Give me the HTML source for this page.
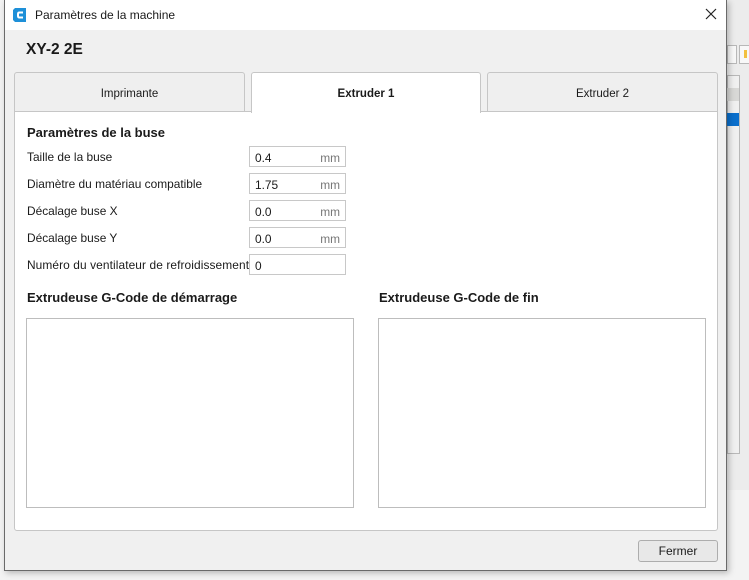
<!DOCTYPE html>
<html><head><style>
*{box-sizing:border-box;margin:0;padding:0}
body{width:749px;height:580px;background:#f3f3f3;position:relative;overflow:hidden;font-family:"Liberation Sans","DejaVu Sans",sans-serif;color:#1a1a1a}
.a{position:absolute}
.lbl{position:absolute;left:27px;font-size:11.9px}
.inp{position:absolute;left:249px;width:97px;height:21px;border:1px solid #c8c8c8;background:#fff;font-size:11.9px;padding:4px 5px}
.inp span{position:absolute;right:5px;top:4px;color:#777}
</style></head><body>
<div class="a" style="left:727px;top:0;width:22px;height:490px;background:#ececec"></div>
<div class="a" style="left:727px;top:45px;width:10px;height:19px;border:1px solid #b8b8b8;background:#f8f8f8"></div>
<div class="a" style="left:739px;top:45px;width:12px;height:19px;border:1px solid #b8b8b8;background:#f8f8f8"><div style="margin:4px 0 0 4px;width:3px;height:8px;background:#f2c040"></div></div>
<div class="a" style="left:727px;top:75px;width:13px;height:379px;border:1px solid #b8b8b8;background:#f0f0f0"></div>
<div class="a" style="left:727px;top:88px;width:12px;height:13px;background:#d8d8d6"></div>
<div class="a" style="left:727px;top:113px;width:12px;height:13px;background:#0a6fcc"></div>
<div class="a" style="left:4px;top:0;width:723px;height:571px;background:#f0f0f0;border:1px solid #6a6a6a;box-shadow:2px 2px 6px rgba(0,0,0,.25)"></div>
<div class="a" style="left:5px;top:0;width:721px;height:30px;background:#fff"></div>
<svg class="a" style="left:12px;top:7px" width="16" height="16" viewBox="0 0 16 16"><path d="M3 1h11v14H3L1 13V3z" fill="#1e90d8"/><path d="M11 5.5H7.5Q6 5.5 6 7v2q0 1.5 1.5 1.5H11" stroke="#fff" stroke-width="2" fill="none"/></svg>
<div class="a" style="left:35px;top:8px;font-size:12px">Paramètres de la machine</div>
<svg class="a" style="left:705px;top:8px" width="12" height="12"><path d="M1 1L11 11M11 1L1 11" stroke="#222" stroke-width="1.2"/></svg>
<div class="a" style="left:26px;top:41px;font-size:15.5px;font-weight:bold">XY-2 2E</div>
<div class="a" style="left:14px;top:72px;width:231px;height:40px;border:1px solid #c6c6c6;border-radius:3px 3px 0 0;background:#efefef;font-size:11.5px;text-align:center;line-height:42px">Imprimante</div>
<div class="a" style="left:487px;top:72px;width:231px;height:40px;border:1px solid #c6c6c6;border-radius:3px 3px 0 0;background:#efefef;font-size:11.5px;text-align:center;line-height:42px">Extruder 2</div>
<div class="a" style="left:14px;top:111px;width:704px;height:420px;border:1px solid #c6c6c6;border-radius:0 0 3px 3px;background:#fff"></div>
<div class="a" style="left:251px;top:72px;width:230px;height:41px;border:1px solid #c6c6c6;border-bottom:none;border-radius:3px 3px 0 0;background:#fff;font-size:11.5px;font-weight:bold;text-align:center;line-height:42px">Extruder 1</div>
<div class="a" style="left:27px;top:125px;font-size:13px;font-weight:bold">Paramètres de la buse</div>
<div class="lbl" style="top:150px">Taille de la buse</div>
<div class="lbl" style="top:177px">Diamètre du matériau compatible</div>
<div class="lbl" style="top:204px">Décalage buse X</div>
<div class="lbl" style="top:231px">Décalage buse Y</div>
<div class="lbl" style="top:258px;letter-spacing:0.1px">Numéro du ventilateur de refroidissement</div>
<div class="inp" style="top:146px">0.4<span>mm</span></div>
<div class="inp" style="top:173px">1.75<span>mm</span></div>
<div class="inp" style="top:200px">0.0<span>mm</span></div>
<div class="inp" style="top:227px">0.0<span>mm</span></div>
<div class="inp" style="top:254px">0</div>
<div class="a" style="left:27px;top:290px;font-size:13px;font-weight:bold">Extrudeuse G-Code de démarrage</div>
<div class="a" style="left:379px;top:290px;font-size:13px;font-weight:bold">Extrudeuse G-Code de fin</div>
<div class="a" style="left:26px;top:318px;width:328px;height:190px;border:1px solid #bdbdbd"></div>
<div class="a" style="left:378px;top:318px;width:328px;height:190px;border:1px solid #bdbdbd"></div>
<div class="a" style="left:638px;top:540px;width:80px;height:22px;border:1px solid #adadad;border-radius:3px;background:#e8e8e8;font-size:12px;text-align:center;line-height:20px">Fermer</div>
</body></html>
